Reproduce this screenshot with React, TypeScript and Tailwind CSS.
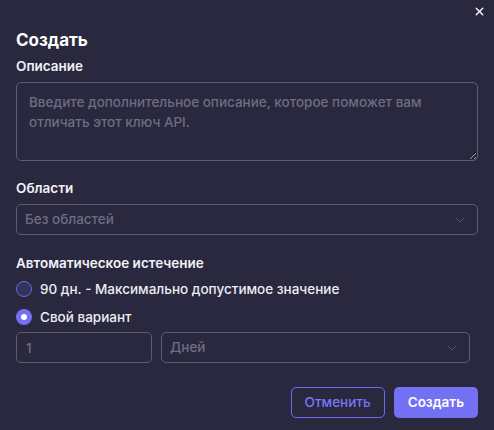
import { X, ChevronDown } from "lucide-react";

function Label({ children }: { children: React.ReactNode }) {
  return <div className="text-[13.5px] font-semibold leading-5 text-[#f1f1f6]">{children}</div>;
}

function SelectBox({ value, className }: { value: string; className?: string }) {
  return (
    <div
      className={`flex h-[31px] items-center justify-between rounded-[5px] border border-[#5d5c72] pl-[8px] pr-[9px] ${className ?? ""}`}
    >
      <span className="text-[13.5px] font-medium text-[#6e6d82]">{value}</span>
      <ChevronDown size={16} strokeWidth={1.25} className="text-[#5f5e74]" />
    </div>
  );
}

function Radio({ checked, label }: { checked: boolean; label: string }) {
  return (
    <label className="flex items-center gap-2">
      {checked ? (
        <span className="flex h-4 w-4 items-center justify-center rounded-full bg-[#7370f4]">
          <span className="h-[6px] w-[6px] rounded-full bg-white" />
        </span>
      ) : (
        <span className="h-4 w-4 rounded-full border border-[#6b67e8] bg-[#34335a]" />
      )}
      <span className="text-[13.5px] font-medium leading-5 text-[#ededf3]">{label}</span>
    </label>
  );
}

export default function App() {
  return (
    <div
      className="relative h-[430px] w-[494px] bg-[#29283f] px-4 text-white"
      style={{ fontFamily: "Inter, 'Noto Sans', sans-serif" }}
    >
      <button className="absolute right-[8px] top-[5px] text-white">
        <X size={13} strokeWidth={2.5} />
      </button>

      <h2 className="pt-[28px] text-[17px] font-bold leading-6">Создать</h2>

      <div className="mt-[4px]">
        <Label>Описание</Label>
        <textarea
          className="mt-[6px] block h-[79px] w-full resize-y rounded-[5px] border border-[#5d5c72] bg-transparent px-3 py-[9px] text-[13.5px] font-medium leading-5 text-white outline-none placeholder:text-[#6e6d82]"
          placeholder="Введите дополнительное описание, которое поможет вам отличать этот ключ API."
        />
      </div>

      <div className="mt-[17px]">
        <Label>Области</Label>
        <SelectBox value="Без областей" className="mt-[6px]" />
      </div>

      <div className="mt-[18px]">
        <Label>Автоматическое истечение</Label>
        <div className="mt-[6px] flex flex-col gap-2">
          <Radio checked={false} label="90 дн. - Максимально допустимое значение" />
          <Radio checked label="Свой вариант" />
        </div>
        <div className="mt-[5px] flex gap-[9px] pr-2">
          <input
            className="h-[31px] w-[136px] rounded-[5px] border border-[#5d5c72] bg-transparent px-[9px] text-[13.5px] font-medium outline-none placeholder:text-[#6e6d82]"
            placeholder="1"
          />
          <SelectBox value="Дней" className="flex-1" />
        </div>
      </div>

      <div className="mt-[24px] flex justify-end gap-[9px]">
        <button className="h-[31px] rounded-[5px] border border-[#6d6af0] px-[13px] text-[13.5px] font-medium text-[#7a77f5]">
          Отменить
        </button>
        <button className="h-[31px] rounded-[5px] bg-[#7370f4] px-[14px] text-[13.5px] font-semibold text-white">
          Создать
        </button>
      </div>
    </div>
  );
}
